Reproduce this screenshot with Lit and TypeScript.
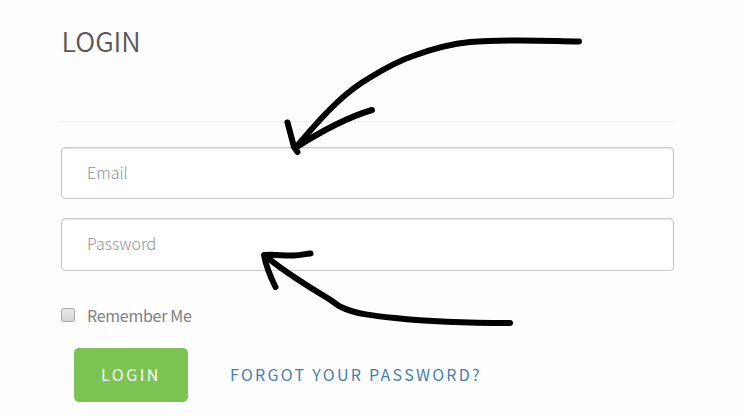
import { LitElement, html, css } from "lit";
import { customElement } from "lit/decorators.js";

@customElement("app-root")
export class AppRoot extends LitElement {
  static styles = css`
    :host {
      display: block;
      position: relative;
      box-sizing: border-box;
      width: 745px;
      height: 418px;
      overflow: hidden;
      padding: 21px 71px 0 61px;
      background: #fefefe;
      font-family: "Noto Sans CJK SC", "Noto Sans", sans-serif;
      color: #808080;
    }
    .title {
      margin: 0;
      padding: 0 0 60px 0.5px;
      border-bottom: 1px solid #ececec;
      font-size: 27px;
      font-weight: 350;
      line-height: 40px;
      letter-spacing: 0;
      color: #58585a;
    }
    form {
      display: flex;
      flex-direction: column;
      padding-top: 25px;
    }
    .field {
      box-sizing: border-box;
      width: 613px;
      height: 52px;
      margin: 0 0 19px;
      padding: 0 25px 2px;
      border: 1px solid #c8c8c8;
      border-radius: 4px;
      outline: none;
      background: #fff;
      box-shadow: inset 0 1px 2px rgba(0, 0, 0, 0.1);
      font: 300 16px/24px "Noto Sans CJK SC", "Noto Sans", sans-serif;
    }
    .password {
      height: 53px;
      padding-bottom: 4px;
    }
    .field::placeholder {
      color: #929292;
      opacity: 1;
    }
    .remember {
      display: flex;
      align-items: center;
      gap: 12px;
      height: 24px;
      margin-top: 13px;
      font-size: 16px;
      line-height: 24px;
      letter-spacing: -0.28px;
    }
    .check {
      appearance: none;
      box-sizing: border-box;
      width: 14px;
      height: 14px;
      margin: 0;
      border: 1px solid #a6a6a6;
      border-radius: 3px;
      background: linear-gradient(#e9e9e9, #d6d6d6);
    }
    .actions {
      display: flex;
      align-items: center;
      gap: 42px;
      padding: 21px 0 0 13px;
      font-size: 16px;
      letter-spacing: 2.28px;
    }
    .submit {
      width: 114px;
      height: 54px;
      padding: 0 0 2px;
      border: 0;
      border-radius: 5px;
      background: #7bc352;
      color: #fff;
      font: inherit;
      letter-spacing: 2.5px;
    }
    .forgot {
      padding-bottom: 2px;
      color: #4680ad;
      text-decoration: none;
    }
    .arrows {
      position: absolute;
      inset: 0;
      fill: none;
      stroke: #000;
      stroke-width: 6;
      stroke-linecap: round;
      stroke-linejoin: round;
      pointer-events: none;
    }
  `;

  render() {
    return html`
      <h1 class="title">LOGIN</h1>
      <form>
        <input class="field" type="email" placeholder="Email" />
        <input class="field password" type="password" placeholder="Password" />
        <label class="remember"><input class="check" type="checkbox" /><span class="label">Remember Me</span></label>
        <div class="actions">
          <button class="submit" type="button">LOGIN</button>
          <a class="forgot" href="#">FORGOT YOUR PASSWORD?</a>
        </div>
      </form>
      <svg class="arrows" width="745" height="418" viewBox="0 0 745 418" aria-hidden="true">
        <path d="M579 41.5C545 41 510 39 470 42C449 44 432 49 413 56C398 61 384 69 370 77.5C347 91 329 108 297 146" />
        <path d="M287.5 122.500L294 147L297.500 152M295 148C320 132 345 118 372 110" />
        <path d="M510 323C470 323 432 322 395 318C375 316 355 314 341 307C336 305 333 301 329 299C306 285 281 270 266 256" />
        <path d="M275.500 287C270 276 266 266 264 255C275 254 284 256 294 255.500C301 255 305 254 310.500 253.500" />
      </svg>
    `;
  }
}
